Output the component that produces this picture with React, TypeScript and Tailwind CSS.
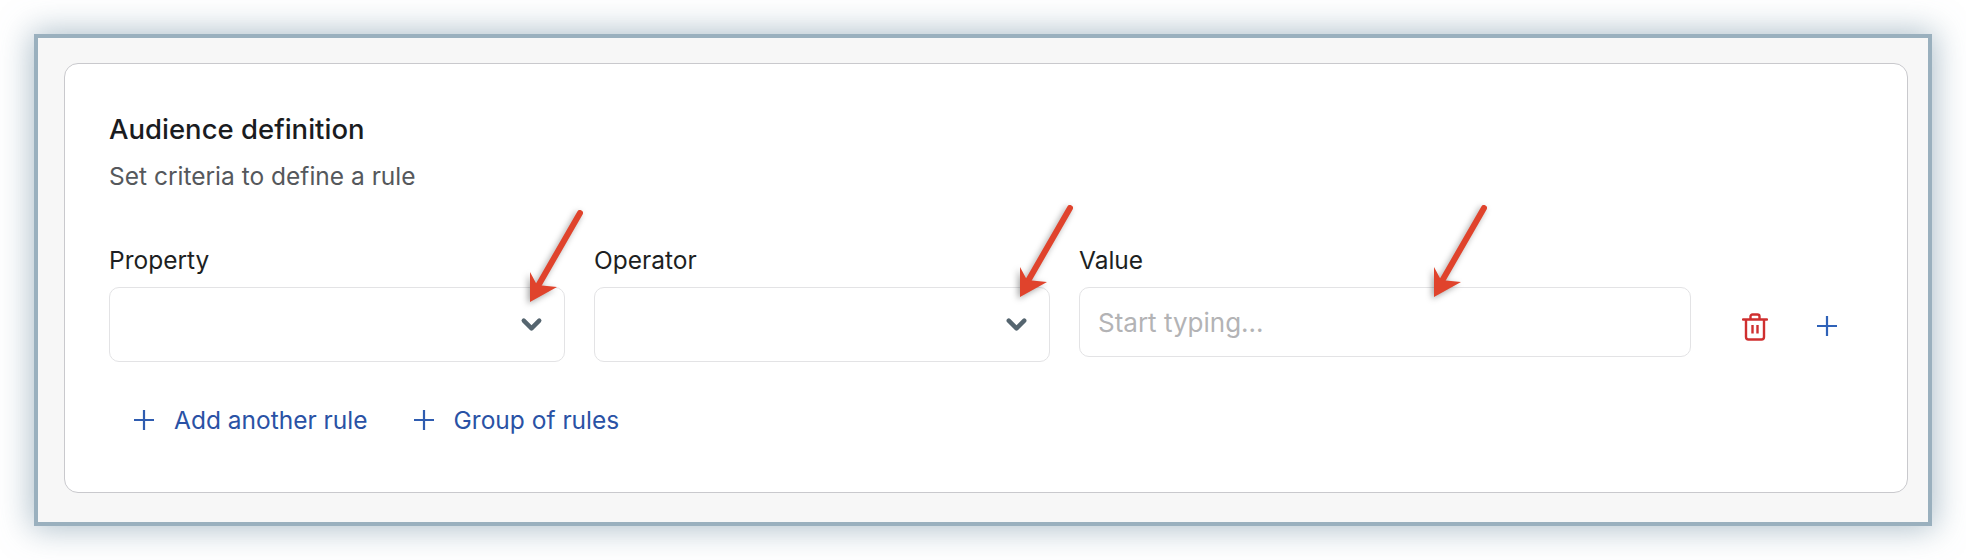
import { ChevronDown } from "lucide-react";

function PlusIcon({ className }: { className: string }) {
  return (
    <svg className={className} width="20" height="20" viewBox="0 0 20 20" fill="none" stroke="currentColor" strokeWidth="2.2">
      <path d="M10 0v20M0 10h20" />
    </svg>
  );
}

function Arrow({ className }: { className: string }) {
  return (
    <svg className={className} width="100" height="110" viewBox="0 0 100 110" fill="none">
      <g className="drop-shadow-[-2px_2px_3px_rgba(0,0,0,0.35)]">
        <path d="M80 9 L38 82" stroke="#e0432c" strokeWidth="6" strokeLinecap="round" />
        <path d="M30 98 L30 68 L37 81 L57 83 Z" fill="#e0432c" />
      </g>
    </svg>
  );
}

function SelectField({ label, arrowClass }: { label: string; arrowClass: string }) {
  return (
    <div className="relative w-[456px] shrink-0">
      <label className="block h-[42px] text-[24.5px] leading-[30px] text-[#1d1f22]">{label}</label>
      <div className="h-[75px] rounded-[10px] border border-[#e3e3e5] bg-white flex items-center justify-end pr-[17px]">
        <ChevronDown size={31} strokeWidth={3.4} className="text-[#55656f]" />
      </div>
      <Arrow className={arrowClass} />
    </div>
  );
}

function AddLink({ label }: { label: string }) {
  return (
    <button className="flex items-center gap-[20px] text-[#2a52a5] text-[24.5px] leading-[30px]">
      <PlusIcon className="text-[#2f5cb0]" />
      {label}
    </button>
  );
}

export default function App() {
  return (
    <div className="w-[1966px] h-[560px] bg-white pt-[34px] pl-[34px] overflow-hidden font-['Inter',sans-serif]">
      <div className="w-[1898px] h-[492px] border-4 border-[#9ab0be] bg-[#f7f7f7] pt-[25px] pl-[26px] shadow-[0_0_30px_3px_rgba(110,140,160,0.55)]">
        <div className="w-[1844px] h-[430px] rounded-[14px] border border-[#c9c9cd] bg-white pl-[44px] pt-[48px]">
          <h2 className="text-[27.5px] leading-[34px] font-medium text-[#1a1c1f]">Audience definition</h2>
          <p className="mt-[15px] text-[24.5px] leading-[30px] text-[#55585c]">Set criteria to define a rule</p>
          <div className="mt-[54px] flex gap-[29px]">
            <SelectField label="Property" arrowClass="absolute -top-[41px] left-[391px]" />
            <SelectField label="Operator" arrowClass="absolute -top-[46px] left-[396px]" />
            <div className="relative w-[612px] shrink-0">
              <label className="block h-[42px] text-[24.5px] leading-[30px] text-[#1d1f22]">Value</label>
              <div className="h-[70px] rounded-[10px] border border-[#e3e3e5] bg-white flex items-center pl-[18px] text-[26px] text-[#b3b3b5]">
                Start typing...
              </div>
              <Arrow className="absolute -top-[46px] left-[325px]" />
            </div>
            <div className="flex items-start pt-[68px] pl-[22px] gap-[49px] h-[117px]">
              <svg width="26" height="28" viewBox="0 0 26 28" fill="none" stroke="#cf2f2f" strokeWidth="2.4">
                <path d="M1 6.5h24" strokeLinecap="round" />
                <path d="M8.5 6V3.5A2 2 0 0 1 10.5 1.5h5a2 2 0 0 1 2 2V6" />
                <path d="M4 6.5V24a2.5 2.5 0 0 0 2.5 2.5h13A2.5 2.5 0 0 0 22 24V6.5" />
                <path d="M10.5 12v8.5M15.5 12v8.5" />
              </svg>
              <PlusIcon className="text-[#2f62b8] mt-[3px]" />
            </div>
          </div>
          <div className="mt-[43px] ml-[25px] flex gap-[46px]">
            <AddLink label="Add another rule" />
            <AddLink label="Group of rules" />
          </div>
        </div>
      </div>
    </div>
  );
}
